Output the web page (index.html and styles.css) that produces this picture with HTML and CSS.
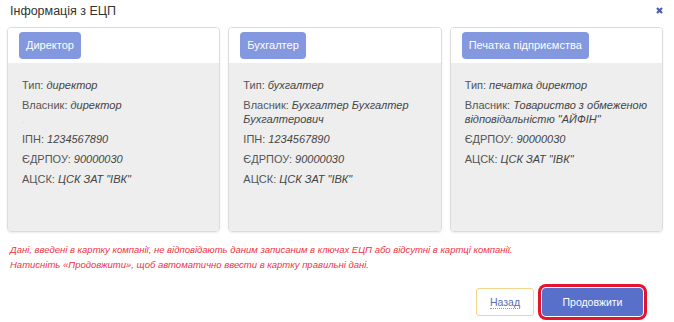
FILE: index.html
```html
<!DOCTYPE html>
<html>
    <head>
        <title>Інформація з ЕЦП</title>
        <meta charset="UTF-8">
        <link rel="stylesheet" href="styles.css">
    </head>
    <body>
        <div class="modal">
            <div class="modal-head">
                <span class="modal-title">Інформація з ЕЦП</span>
                <span class="modal-close">
                    <svg width="7" height="7" viewBox="0 0 7 7"><path d="M1 1L6 6M6 1L1 6" stroke="#4b5db3" stroke-width="2.2"/></svg>
                </span>
            </div>

            <div class="cards">
                <div class="card">
                    <div class="card-head"><span class="tag">Директор</span></div>
                    <div class="card-body">
                        <p>Тип: <i>директор</i></p>
                        <p>Власник: <i>директор</i><br><span class="faint">.</span></p>
                        <p>ІПН: <i>1234567890</i></p>
                        <p>ЄДРПОУ: <i>90000030</i></p>
                        <p>АЦСК: <i>ЦСК ЗАТ "ІВК"</i></p>
                    </div>
                </div>
                <div class="card">
                    <div class="card-head"><span class="tag">Бухгалтер</span></div>
                    <div class="card-body">
                        <p>Тип: <i>бухгалтер</i></p>
                        <p>Власник: <i>Бухгалтер Бухгалтер Бухгалтерович</i></p>
                        <p>ІПН: <i>1234567890</i></p>
                        <p>ЄДРПОУ: <i>90000030</i></p>
                        <p>АЦСК: <i>ЦСК ЗАТ "ІВК"</i></p>
                    </div>
                </div>
                <div class="card">
                    <div class="card-head"><span class="tag">Печатка підприємства</span></div>
                    <div class="card-body">
                        <p>Тип: <i>печатка директор</i></p>
                        <p>Власник: <i>Товариство з обмеженою відповідальністю "АЙФІН"</i></p>
                        <p>ЄДРПОУ: <i>90000030</i></p>
                        <p>АЦСК: <i>ЦСК ЗАТ "ІВК"</i></p>
                    </div>
                </div>
            </div>

            <div class="warning">
                Дані, введені в картку компанії, не відповідають даним записаним в ключах ЕЦП або відсутні в картці компанії.<br>
                Натисніть «Продовжити», щоб автоматично ввести в картку правильні дані.
            </div>

            <div class="modal-foot">
                <button class="btn btn-back"><span>Назад</span></button>
                <button class="btn btn-next">Продовжити</button>
            </div>
        </div>
    </body>
</html>
```

FILE: styles.css
```css
* { box-sizing: border-box; }

body {
    margin: 0;
    background: white;
    font-family: "Liberation Sans", Arial, sans-serif;
    color: #333;
}

.modal {
    width: 674px;
    height: 322px;
}

.modal-head {
    display: flex;
    justify-content: space-between;
    align-items: flex-start;
    height: 27px;
    padding: 4px 11px 0 10px;
}

.modal-title {
    font-size: 12.5px;
    color: #333;
}

.modal-close {
    padding-top: 3px;
    line-height: 0;
}

.cards {
    display: flex;
    gap: 8px;
    padding: 0 11px 0 7px;
}

.card {
    flex: 1;
    height: 205px;
    display: flex;
    flex-direction: column;
    border: 1px solid #dcdcdc;
    border-radius: 4px;
    overflow: hidden;
    box-shadow: 0 1px 2px rgba(0, 0, 0, 0.08);
}

.card-head {
    height: 35px;
    padding: 4px 11px 0;
    background: white;
}

.tag {
    display: inline-block;
    height: 27px;
    line-height: 27px;
    padding: 0 7px;
    border-radius: 4px;
    background: #8398de;
    color: white;
    font-size: 11px;
}

.card-body {
    flex: 1;
    background: #eeeeee;
    padding: 15px 14px 0 14px;
}

.card-body p {
    margin: 0 0 6px;
    font-size: 11px;
    line-height: 14px;
    color: #555;
}

.card-body i {
    color: #444;
}

.faint {
    color: #eadcb8;
}

.warning {
    padding: 10px 10px 0;
    font-size: 9.5px;
    line-height: 15px;
    font-style: italic;
    color: #f03246;
}

.modal-foot {
    display: flex;
    justify-content: flex-end;
    align-items: center;
    gap: 8px;
    padding: 16px 31px 0 0;
}

.btn {
    height: 28px;
    border-radius: 3px;
    font-family: "Liberation Sans", Arial, sans-serif;
    font-size: 10.5px;
    cursor: pointer;
}

.btn-back {
    width: 58px;
    background: white;
    border: 1px solid #f5d58c;
    color: #5a6cae;
}

.btn-back span {
    border-bottom: 1px dotted #8a96c8;
}

.btn-next {
    width: 101px;
    background: #5870c9;
    border: none;
    color: white;
    border-radius: 4px;
    box-shadow: 0 0 0 1px #ffffff, 0 0 0 4px #e5142c;
}
```
